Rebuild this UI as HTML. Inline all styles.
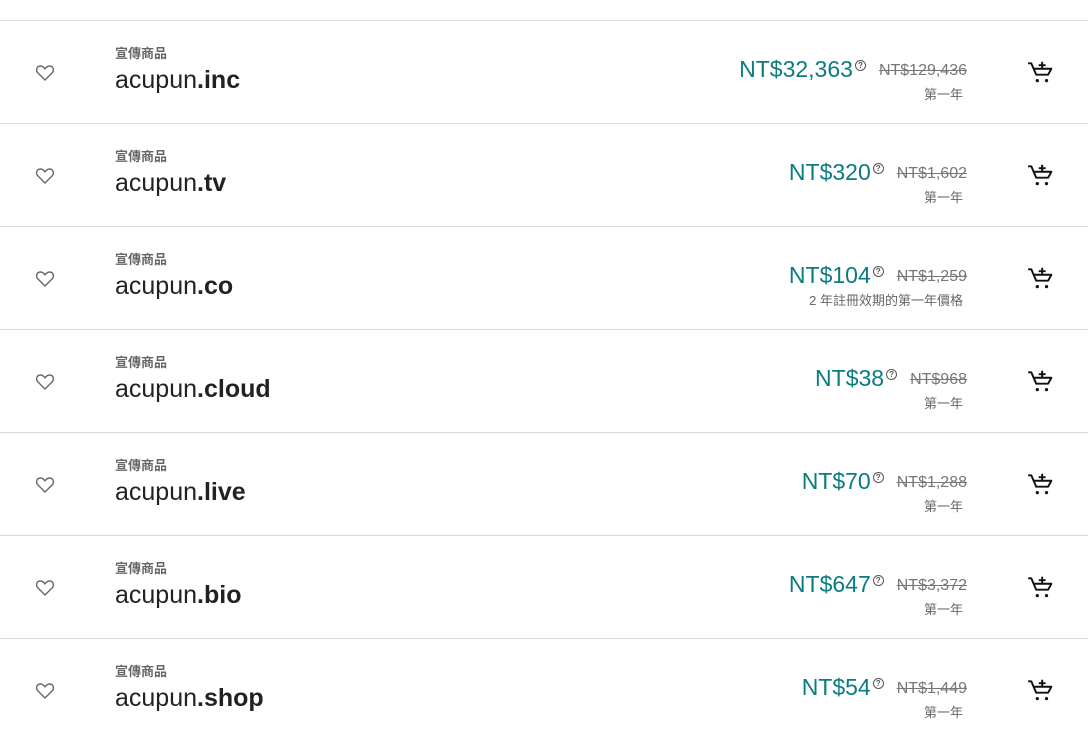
<!DOCTYPE html>
<html><head><meta charset="utf-8"><style>
body{margin:0;background:#fff;width:1088px;height:729px;overflow:hidden;font-family:"Liberation Sans","Noto Sans CJK TC",sans-serif;}
.row{position:absolute;left:0;width:1088px;height:102px;border-top:1px solid #d6d9dd;}
.heart{position:absolute;left:35px;top:42px;}
.lab{position:absolute;left:115px;top:22px;font-size:13px;font-weight:bold;color:#666;}
.dom{position:absolute;left:115px;top:45px;font-size:25px;color:#222;}
.dom b{font-weight:bold;}
.pr{position:absolute;right:121px;top:35px;display:flex;align-items:flex-start;white-space:nowrap;}
.p{font-size:23px;color:#0a7c80;}
.q{display:inline-block;width:9px;height:9px;border:1px solid #555;border-radius:50%;font-size:8px;line-height:9px;text-align:center;color:#555;vertical-align:top;margin-top:4px;margin-left:2px;font-weight:bold;}
.s{font-size:16px;color:#777;text-decoration:line-through;margin-left:13px;margin-top:6px;}
.sub{position:absolute;right:125px;top:63px;font-size:13px;color:#666;}
.cart{position:absolute;left:1027px;top:38px;}
</style></head><body>
<div class="row" style="top:20px">
<svg class="heart" width="20" height="20" viewBox="0 0 20 20"><path d="M10 17 L3 10 C0.5 7.5 1.5 3 5.5 3 C7.8 3 9 4.5 10 5.8 C11 4.5 12.2 3 14.5 3 C18.5 3 19.5 7.5 17 10 Z" fill="none" stroke="#666" stroke-width="1.4"/></svg>
<div class="lab">宣傳商品</div><div class="dom">acupun<b>.inc</b></div>
<div class="pr"><span class="p">NT$32,363<span class="q">?</span></span><span class="s">NT$129,436</span></div>
<div class="sub">第一年</div>
<svg class="cart" width="26" height="26" viewBox="0 0 24 24"><path d="M1 4 H4 L8.5 14.5 H19.5 L22.5 9 H6" fill="none" stroke="#111" stroke-width="1.8" stroke-linejoin="round"/><path d="M14 2.5 V9 M10.8 5.7 H17.2" stroke="#111" stroke-width="1.8"/><circle cx="9.5" cy="20" r="1.5" fill="#111"/><circle cx="18" cy="20" r="1.5" fill="#111"/></svg>
</div>

<div class="row" style="top:123px">
<svg class="heart" width="20" height="20" viewBox="0 0 20 20"><path d="M10 17 L3 10 C0.5 7.5 1.5 3 5.5 3 C7.8 3 9 4.5 10 5.8 C11 4.5 12.2 3 14.5 3 C18.5 3 19.5 7.5 17 10 Z" fill="none" stroke="#666" stroke-width="1.4"/></svg>
<div class="lab">宣傳商品</div><div class="dom">acupun<b>.tv</b></div>
<div class="pr"><span class="p">NT$320<span class="q">?</span></span><span class="s">NT$1,602</span></div>
<div class="sub">第一年</div>
<svg class="cart" width="26" height="26" viewBox="0 0 24 24"><path d="M1 4 H4 L8.5 14.5 H19.5 L22.5 9 H6" fill="none" stroke="#111" stroke-width="1.8" stroke-linejoin="round"/><path d="M14 2.5 V9 M10.8 5.7 H17.2" stroke="#111" stroke-width="1.8"/><circle cx="9.5" cy="20" r="1.5" fill="#111"/><circle cx="18" cy="20" r="1.5" fill="#111"/></svg>
</div>

<div class="row" style="top:226px">
<svg class="heart" width="20" height="20" viewBox="0 0 20 20"><path d="M10 17 L3 10 C0.5 7.5 1.5 3 5.5 3 C7.8 3 9 4.5 10 5.8 C11 4.5 12.2 3 14.5 3 C18.5 3 19.5 7.5 17 10 Z" fill="none" stroke="#666" stroke-width="1.4"/></svg>
<div class="lab">宣傳商品</div><div class="dom">acupun<b>.co</b></div>
<div class="pr"><span class="p">NT$104<span class="q">?</span></span><span class="s">NT$1,259</span></div>
<div class="sub">2 年註冊效期的第一年價格</div>
<svg class="cart" width="26" height="26" viewBox="0 0 24 24"><path d="M1 4 H4 L8.5 14.5 H19.5 L22.5 9 H6" fill="none" stroke="#111" stroke-width="1.8" stroke-linejoin="round"/><path d="M14 2.5 V9 M10.8 5.7 H17.2" stroke="#111" stroke-width="1.8"/><circle cx="9.5" cy="20" r="1.5" fill="#111"/><circle cx="18" cy="20" r="1.5" fill="#111"/></svg>
</div>

<div class="row" style="top:329px">
<svg class="heart" width="20" height="20" viewBox="0 0 20 20"><path d="M10 17 L3 10 C0.5 7.5 1.5 3 5.5 3 C7.8 3 9 4.5 10 5.8 C11 4.5 12.2 3 14.5 3 C18.5 3 19.5 7.5 17 10 Z" fill="none" stroke="#666" stroke-width="1.4"/></svg>
<div class="lab">宣傳商品</div><div class="dom">acupun<b>.cloud</b></div>
<div class="pr"><span class="p">NT$38<span class="q">?</span></span><span class="s">NT$968</span></div>
<div class="sub">第一年</div>
<svg class="cart" width="26" height="26" viewBox="0 0 24 24"><path d="M1 4 H4 L8.5 14.5 H19.5 L22.5 9 H6" fill="none" stroke="#111" stroke-width="1.8" stroke-linejoin="round"/><path d="M14 2.5 V9 M10.8 5.7 H17.2" stroke="#111" stroke-width="1.8"/><circle cx="9.5" cy="20" r="1.5" fill="#111"/><circle cx="18" cy="20" r="1.5" fill="#111"/></svg>
</div>

<div class="row" style="top:432px">
<svg class="heart" width="20" height="20" viewBox="0 0 20 20"><path d="M10 17 L3 10 C0.5 7.5 1.5 3 5.5 3 C7.8 3 9 4.5 10 5.8 C11 4.5 12.2 3 14.5 3 C18.5 3 19.5 7.5 17 10 Z" fill="none" stroke="#666" stroke-width="1.4"/></svg>
<div class="lab">宣傳商品</div><div class="dom">acupun<b>.live</b></div>
<div class="pr"><span class="p">NT$70<span class="q">?</span></span><span class="s">NT$1,288</span></div>
<div class="sub">第一年</div>
<svg class="cart" width="26" height="26" viewBox="0 0 24 24"><path d="M1 4 H4 L8.5 14.5 H19.5 L22.5 9 H6" fill="none" stroke="#111" stroke-width="1.8" stroke-linejoin="round"/><path d="M14 2.5 V9 M10.8 5.7 H17.2" stroke="#111" stroke-width="1.8"/><circle cx="9.5" cy="20" r="1.5" fill="#111"/><circle cx="18" cy="20" r="1.5" fill="#111"/></svg>
</div>

<div class="row" style="top:535px">
<svg class="heart" width="20" height="20" viewBox="0 0 20 20"><path d="M10 17 L3 10 C0.5 7.5 1.5 3 5.5 3 C7.8 3 9 4.5 10 5.8 C11 4.5 12.2 3 14.5 3 C18.5 3 19.5 7.5 17 10 Z" fill="none" stroke="#666" stroke-width="1.4"/></svg>
<div class="lab">宣傳商品</div><div class="dom">acupun<b>.bio</b></div>
<div class="pr"><span class="p">NT$647<span class="q">?</span></span><span class="s">NT$3,372</span></div>
<div class="sub">第一年</div>
<svg class="cart" width="26" height="26" viewBox="0 0 24 24"><path d="M1 4 H4 L8.5 14.5 H19.5 L22.5 9 H6" fill="none" stroke="#111" stroke-width="1.8" stroke-linejoin="round"/><path d="M14 2.5 V9 M10.8 5.7 H17.2" stroke="#111" stroke-width="1.8"/><circle cx="9.5" cy="20" r="1.5" fill="#111"/><circle cx="18" cy="20" r="1.5" fill="#111"/></svg>
</div>

<div class="row" style="top:638px">
<svg class="heart" width="20" height="20" viewBox="0 0 20 20"><path d="M10 17 L3 10 C0.5 7.5 1.5 3 5.5 3 C7.8 3 9 4.5 10 5.8 C11 4.5 12.2 3 14.5 3 C18.5 3 19.5 7.5 17 10 Z" fill="none" stroke="#666" stroke-width="1.4"/></svg>
<div class="lab">宣傳商品</div><div class="dom">acupun<b>.shop</b></div>
<div class="pr"><span class="p">NT$54<span class="q">?</span></span><span class="s">NT$1,449</span></div>
<div class="sub">第一年</div>
<svg class="cart" width="26" height="26" viewBox="0 0 24 24"><path d="M1 4 H4 L8.5 14.5 H19.5 L22.5 9 H6" fill="none" stroke="#111" stroke-width="1.8" stroke-linejoin="round"/><path d="M14 2.5 V9 M10.8 5.7 H17.2" stroke="#111" stroke-width="1.8"/><circle cx="9.5" cy="20" r="1.5" fill="#111"/><circle cx="18" cy="20" r="1.5" fill="#111"/></svg>
</div>
</body></html>
